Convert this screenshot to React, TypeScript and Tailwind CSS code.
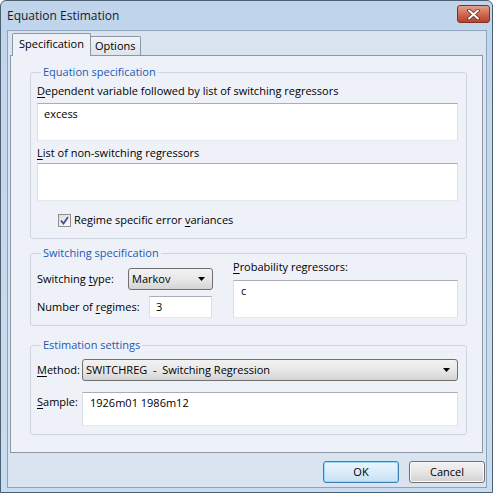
import React from "react";

function U({ children }: { children: React.ReactNode }) {
  return <span className="underline underline-offset-[2px]">{children}</span>;
}

function Legend({ children }: { children: React.ReactNode }) {
  return (
    <legend className="ml-[4px] px-[2px] leading-[14px] text-[#1d58b3]">{children}</legend>
  );
}

function TextBox({ className, children }: { className?: string; children?: React.ReactNode }) {
  return (
    <div
      className={
        "bg-white border border-t-[#abadb3] border-x-[#dbdfe6] border-b-[#e3e9ef] pl-[6px] pt-[3px] " +
        (className ?? "")
      }
    >
      {children}
    </div>
  );
}

function Arrow() {
  return (
    <svg width="7" height="4" viewBox="0 0 7 4" className="shrink-0">
      <path d="M0 0 L7 0 L3.5 4 Z" fill="#000" />
    </svg>
  );
}

function Combo({ className, children }: { className?: string; children: React.ReactNode }) {
  return (
    <div
      className={
        "h-[22px] flex items-center justify-between rounded-[3px] border border-[#707070] bg-gradient-to-b from-[#f2f2f2] via-[#e8e8e8] to-[#d4d4d4] pl-[3px] pr-[7px] whitespace-pre " +
        (className ?? "")
      }
    >
      <span>{children}</span>
      <Arrow />
    </div>
  );
}

export default function App() {
  return (
    <div className="w-[495px] h-[494px] bg-white">
      <div className="w-[493px] h-[493px] flex flex-col rounded-t-[6px] border border-[#4c6072] bg-gradient-to-b from-[#c0d5ec] to-[#cadcef] font-['Open_Sans',sans-serif] text-[11px] leading-[14px] text-black">
        {/* Title bar */}
        <div className="h-[29px] shrink-0 flex items-start justify-between pl-[6px] pr-[2px]">
          <span className="mt-[7px] text-[12px] leading-[15px] text-[#1a1a1a]">Equation Estimation</span>
          <div className="mt-[4px] w-[33px] h-[18px] rounded-[3px] border border-[#7e3326] bg-gradient-to-b from-[#e2a08d] via-[#cf6a52] to-[#b8402a] flex items-center justify-center">
            <svg width="13" height="11" viewBox="0 0 13 11">
              <path d="M2 1.5 L11 9.5 M11 1.5 L2 9.5" stroke="#5a2a22" strokeWidth="3.6" strokeLinecap="round" />
              <path d="M2 1.5 L11 9.5 M11 1.5 L2 9.5" stroke="#ffffff" strokeWidth="2" strokeLinecap="round" />
            </svg>
          </div>
        </div>

        {/* Client area */}
        <div className="flex-1 ml-[6px] mr-[5px] mb-[4px] border border-[#8ea4bd] bg-[#dae4f0] flex flex-col pl-[2px] pr-[3px] pt-[2px]">
          {/* Tabs */}
          <div className="flex items-end pl-[2px] h-[22px] relative z-10">
            <div className="h-[23px] -mb-[1px] border border-b-0 border-[#8c97a5] bg-[#eef2f8] px-[6px] flex items-start pt-[3px] rounded-t-[2px]">
              Specification
            </div>
            <div className="h-[19px] border border-b-0 border-l-0 border-[#8c97a5] bg-gradient-to-b from-[#f0f3f7] to-[#dde4ec] px-[4px] pt-[2px] rounded-tr-[2px]">
              Options
            </div>
          </div>

          {/* Tab panel */}
          <div className="h-[398px] border border-[#8c97a5] bg-[#eef2f8] pl-[19px] pr-[15px] pt-[9px] flex flex-col">
            {/* Equation specification */}
            <fieldset className="border border-[#cdd6df] rounded-[3px] pl-[6px] pr-[8px] pb-[11px]">
              <Legend>Equation specification</Legend>
              <div className="mt-[5px]">
                <U>D</U>ependent variable followed by list of switching regressors
              </div>
              <TextBox className="mt-[5px] h-[38px]">excess</TextBox>
              <div className="mt-[5px]">
                <U>L</U>ist of non-switching regressors
              </div>
              <TextBox className="mt-[3px] h-[38px]" />
              <div className="mt-[12px] h-[14px] flex items-center pl-[21px]">
                <div className="w-[13px] h-[13px] border border-[#8e8f8f] bg-gradient-to-br from-[#dcdcdc] to-[#fbfbfb] flex items-center justify-center">
                  <svg width="11" height="11" viewBox="0 0 11 11">
                    <path d="M2 5.5 L4.5 8.5 L9 2" stroke="#3a4f8c" strokeWidth="1.7" fill="none" />
                  </svg>
                </div>
                <span className="ml-[3px]">
                  Regime specific error <U>v</U>ariances
                </span>
              </div>
            </fieldset>

            {/* Switching specification */}
            <fieldset className="mt-[7px] border border-[#cdd6df] rounded-[3px] pl-[6px] pr-[8px] pb-[7px]">
              <Legend>Switching specification</Legend>
              <div className="flex">
                <div className="w-[176px] pt-[8px] flex flex-col gap-[6px]">
                  <div className="h-[22px] flex items-center justify-between">
                    <span>
                      Switching <U>t</U>ype:
                    </span>
                    <Combo className="w-[85px]">Markov</Combo>
                  </div>
                  <div className="h-[22px] flex items-center justify-between pr-[1px]">
                    <span>
                      Number of <U>r</U>egimes:
                    </span>
                    <div className="w-[63px] h-[22px] bg-white border border-t-[#abadb3] border-x-[#dbdfe6] border-b-[#e3e9ef] pl-[6px] flex items-center">
                      3
                    </div>
                  </div>
                </div>
                <div className="ml-[20px] flex-1 flex flex-col">
                  <div>
                    <U>P</U>robability regressors:
                  </div>
                  <TextBox className="mt-[6px] h-[38px] pl-[7px]">c</TextBox>
                </div>
              </div>
            </fieldset>

            {/* Estimation settings */}
            <fieldset className="mt-[12px] border border-[#cdd6df] rounded-[3px] pl-[6px] pr-[8px] pb-[8px]">
              <Legend>Estimation settings</Legend>
              <div className="mt-[7px] h-[22px] flex items-center">
                <span className="w-[45px] shrink-0">
                  <U>M</U>ethod:
                </span>
                <Combo className="flex-1">SWITCHREG  -  Switching Regression</Combo>
              </div>
              <div className="mt-[11px] flex items-start">
                <span className="w-[45px] shrink-0 pt-[3px]">
                  <U>S</U>ample:
                </span>
                <TextBox className="flex-1 h-[34px] pl-[7px]">1926m01 1986m12</TextBox>
              </div>
            </fieldset>
          </div>

          {/* Buttons */}
          <div className="mt-[8px] flex justify-end gap-[10px] -mr-[2px]">
            <button className="w-[76px] h-[22px] rounded-[3px] border border-[#3c7fb1] bg-gradient-to-b from-[#eaf6fd] via-[#dcecfa] to-[#c4e0f5] shadow-[inset_0_0_0_1px_#9ad8f8] text-[11px]">
              OK
            </button>
            <button className="w-[76px] h-[22px] rounded-[3px] border border-[#707070] bg-gradient-to-b from-[#f2f2f2] via-[#e6e6e6] to-[#d2d2d2] shadow-[inset_0_0_0_1px_#fbfbfb] text-[11px]">
              Cancel
            </button>
          </div>
        </div>
      </div>
    </div>
  );
}
